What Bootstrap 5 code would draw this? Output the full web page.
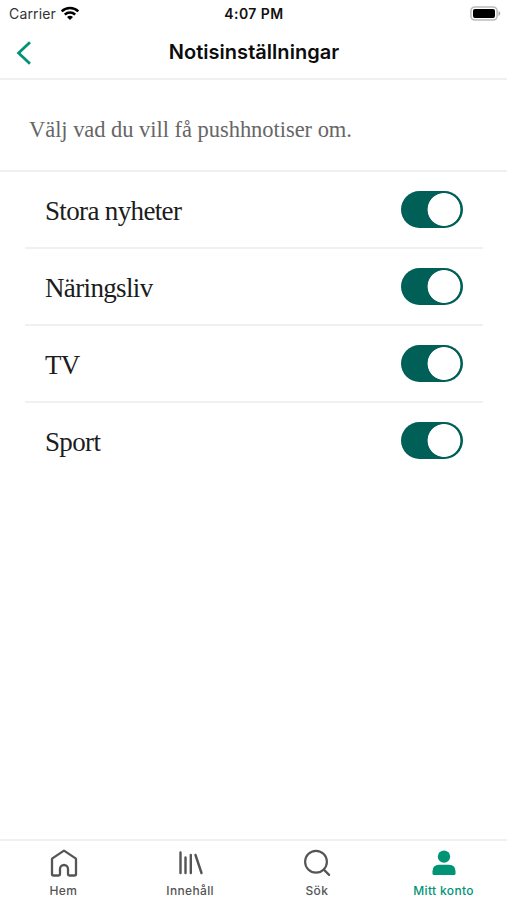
<!DOCTYPE html>
<html lang="sv">
<head>
<meta charset="utf-8">
<meta name="viewport" content="width=device-width, initial-scale=1">
<title>Notisinställningar</title>
<link href="https://cdn.jsdelivr.net/npm/bootstrap@5.3.0/dist/css/bootstrap.min.css" rel="stylesheet">
<style>
  body { font-family: Inter, "Liberation Sans", sans-serif; color: #111; background: #fff; }
  .screen { height: 900px; overflow: hidden; }
  svg { display: block; }
  .status { height: 27px; font-size: 14px; line-height: 27px; padding: 0 6px 0 9px; }
  .status > * { flex: 1 1 0; }
  .carrier { color: #333; letter-spacing: .15px; }
  .clock { font-weight: 600; letter-spacing: .45px; padding-right: 2px; }
  .titlebar { height: 53px; border-bottom: 2px solid #f0f0f0; padding: 0 14px 0 15px; }
  .titlebar > * { flex: 1 1 0; }
  .titlebar h1 { flex: 0 0 auto; font-size: 20px; line-height: 51px; font-weight: 600; letter-spacing: .03px; color: #0c0c0c; }
  .intro { height: 92px; border-bottom: 2px solid #f0f0f0; padding: 10px 29px 0; }
  .intro p, .setting { font-family: "Liberation Serif", serif; }
  .intro p { font-size: 22.5px; letter-spacing: -.04px; color: #666; white-space: nowrap; }
  .settings { padding: 0 24px 0 25px; }
  .setting { height: 77px; padding: 0 20px; font-size: 27px; letter-spacing: -.65px; color: #1c1c1c; }
  .setting span { padding-top: 4px; }
  .setting:first-child { height: 75px; }
  .setting + .setting { border-top: 2px solid #f0f0f0; }
  .setting .form-check-input {
    width: 62px; height: 37px; border: 0; border-radius: 19px; margin: 0; background-color: #005f57;
    background-image: radial-gradient(circle at 43px 18.5px, #fff 16px, transparent 16.8px);
    background-size: 100% 100%; background-position: 0 0;
  }
  .tabs { height: 61px; border-top: 2px solid #f0f0f0; font-size: 12px; }
  .tabs a { color: #555; padding-top: 8px; }
  .tabs a.current { color: #009477; }
  .tabs span { line-height: 16px; margin-top: 6px; letter-spacing: .35px; font-weight: 500; }
  .tabs .nudged { margin-left: 2px; }
</style>
</head>
<body>
<div class="screen d-flex flex-column">
  <div class="status d-flex align-items-center">
    <div class="carrier d-flex align-items-center">
      <span class="me-1">Carrier</span>
      <svg width="20" height="15" viewBox="0 0 20 15" fill="none" stroke="#000" stroke-width="2.5"><path d="M1.7 5.3a12 12 0 0 1 16.6 0M4.8 8.600a7.500 7.500 0 0 1 10.400 0"/><path d="M10 14 7 11.100a4.300 4.300 0 0 1 6 0z" fill="#000" stroke="none"/></svg>
    </div>
    <div class="clock text-center">4:07 PM</div>
    <div class="d-flex justify-content-end">
      <svg width="31" height="15" viewBox="0 0 31 15"><rect x=".9" y=".9" width="26.2" height="13.2" rx="4" fill="#fff" stroke="#bbb" stroke-width="1.5"/><rect x="3" y="3" width="22" height="9" rx="2" fill="#000"/><path d="M28.5 5v5q1.8-.8 1.8-2.5T28.500 5" fill="#aaa"/></svg>
    </div>
  </div>
  <header class="titlebar d-flex align-items-center">
    <a href="#" aria-label="Tillbaka"><svg width="18" height="26" viewBox="0 0 18 26" fill="none" stroke="#009477" stroke-width="2.8"><path d="M15 2.300 3.600 13 15 23.700"/></svg></a>
    <h1 class="mb-0">Notisinställningar</h1>
    <span></span>
  </header>
  <section class="intro d-flex align-items-center"><p class="mb-0">Välj vad du vill få pushhnotiser om.</p></section>
  <main class="settings flex-grow-1">
    <label class="setting form-switch d-flex align-items-center justify-content-between"><span>Stora nyheter</span><input class="form-check-input" type="checkbox" role="switch" checked></label>
    <label class="setting form-switch d-flex align-items-center justify-content-between"><span>Näringsliv</span><input class="form-check-input" type="checkbox" role="switch" checked></label>
    <label class="setting form-switch d-flex align-items-center justify-content-between"><span>TV</span><input class="form-check-input" type="checkbox" role="switch" checked></label>
    <label class="setting form-switch d-flex align-items-center justify-content-between"><span>Sport</span><input class="form-check-input" type="checkbox" role="switch" checked></label>
  </main>
  <nav class="tabs nav nav-fill flex-nowrap">
    <a class="col-3 d-flex flex-column align-items-center text-decoration-none" href="#"><svg class="nudged" width="28" height="28" viewBox="0 0 28 28" fill="none" stroke="currentColor" stroke-width="2.300" stroke-linejoin="round"><path d="M14 1.600 2.400 9.400Q2 9.700 2 10.300V25q0 1.500 1.500 1.500h5.200q1.300 0 1.300-1.300V20a4 4 0 0 1 8 0v5.200q0 1.300 1.300 1.300h5.200Q26 26.500 26 25V10.300q0-.6-.4-.9z"/></svg><span>Hem</span></a>
    <a class="col-3 d-flex flex-column align-items-center text-decoration-none" href="#"><svg class="nudged" width="28" height="28" viewBox="0 0 28 28" fill="none" stroke="currentColor" stroke-width="2.400" stroke-linecap="round"><path d="M3.500 3.500v20.500M8.500 8.500v15.500M13.800 6v18M18.500 6l6 18"/></svg><span>Innehåll</span></a>
    <a class="col-3 d-flex flex-column align-items-center text-decoration-none" href="#"><svg width="28" height="28" viewBox="0 0 28 28" fill="none" stroke="currentColor" stroke-width="2.200" stroke-linecap="round"><circle cx="13" cy="12.800" r="10.900"/><path d="m20.800 20.600 5.300 5.300"/></svg><span>Sök</span></a>
    <a class="current col-3 d-flex flex-column align-items-center text-decoration-none" href="#" aria-current="page"><svg width="28" height="28" viewBox="0 0 28 28" fill="currentColor"><circle cx="14" cy="7.600" r="6.200"/><path d="M2.500 24.500v-2.300Q2.500 15.700 9 15.700h10q6.500 0 6.500 6.500v2.300q0 1.500-1.500 1.500H4q-1.500 0-1.500-1.500z"/></svg><span>Mitt konto</span></a>
  </nav>
</div>
<script src="https://cdn.jsdelivr.net/npm/bootstrap@5.3.0/dist/js/bootstrap.bundle.min.js"></script>
</body>
</html>
